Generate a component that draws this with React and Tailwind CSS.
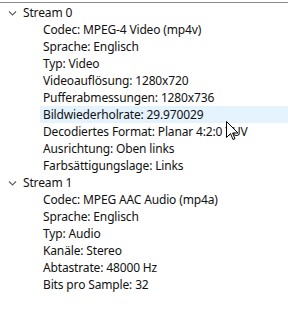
import React from "react";

const Chevron = () => (
  <svg width="9" height="6" viewBox="0 0 9 6" className="shrink-0">
    <path d="M1 1.5 L4.5 5 L8 1.5" fill="none" stroke="#5f5f5f" strokeWidth="1.1" />
  </svg>
);

const streams = [
  {
    name: "Stream 0",
    items: [
      "Codec: MPEG-4 Video (mp4v)",
      "Sprache: Englisch",
      "Typ: Video",
      "Videoauflösung: 1280x720",
      "Pufferabmessungen: 1280x736",
      "Bildwiederholrate: 29.970029",
      "Decodiertes Format: Planar 4:2:0 YUV",
      "Ausrichtung: Oben links",
      "Farbsättigungslage: Links",
    ],
  },
  {
    name: "Stream 1",
    items: [
      "Codec: MPEG AAC Audio (mp4a)",
      "Sprache: Englisch",
      "Typ: Audio",
      "Kanäle: Stereo",
      "Abtastrate: 48000 Hz",
      "Bits pro Sample: 32",
    ],
  },
];

export default function App() {
  return (
    <div
      className="relative w-[288px] h-[311px] bg-white overflow-hidden text-[12px] tracking-[-0.15px] text-[#111]"
      style={{ fontFamily: '"Noto Sans", sans-serif' }}
    >
      <div className="mt-[2px] h-px bg-[#8c8c8c]" />
      <div className="pt-[1px]">
        {streams.map((s) => (
          <div key={s.name}>
            <div className="h-[17px] flex items-center">
              <div className="w-[23px] flex justify-center pl-[2px]">
                <Chevron />
              </div>
              <span className="leading-none pt-[1px]">{s.name}</span>
            </div>
            {s.items.map((it) => (
              <div
                key={it}
                className={
                  "h-[17px] ml-[40px] pl-[3px] flex items-center whitespace-nowrap " +
                  (it.startsWith("Bildwiederholrate") ? "bg-[#e5f3ff]" : "")
                }
              >
                <span className="leading-none pt-[1px]">{it}</span>
              </div>
            ))}
          </div>
        ))}
      </div>
      <svg
        className="absolute left-[226px] top-[121px]"
        width="13"
        height="21"
        viewBox="0 0 13 21"
      >
        <path
          d="M0.5 0.5 L0.5 16.5 L4.5 12.5 L7 18.5 L9 17.7 L6.6 12 L12 12 Z"
          fill="white"
          stroke="black"
          strokeWidth="1"
          strokeLinejoin="miter"
        />
      </svg>
    </div>
  );
}
